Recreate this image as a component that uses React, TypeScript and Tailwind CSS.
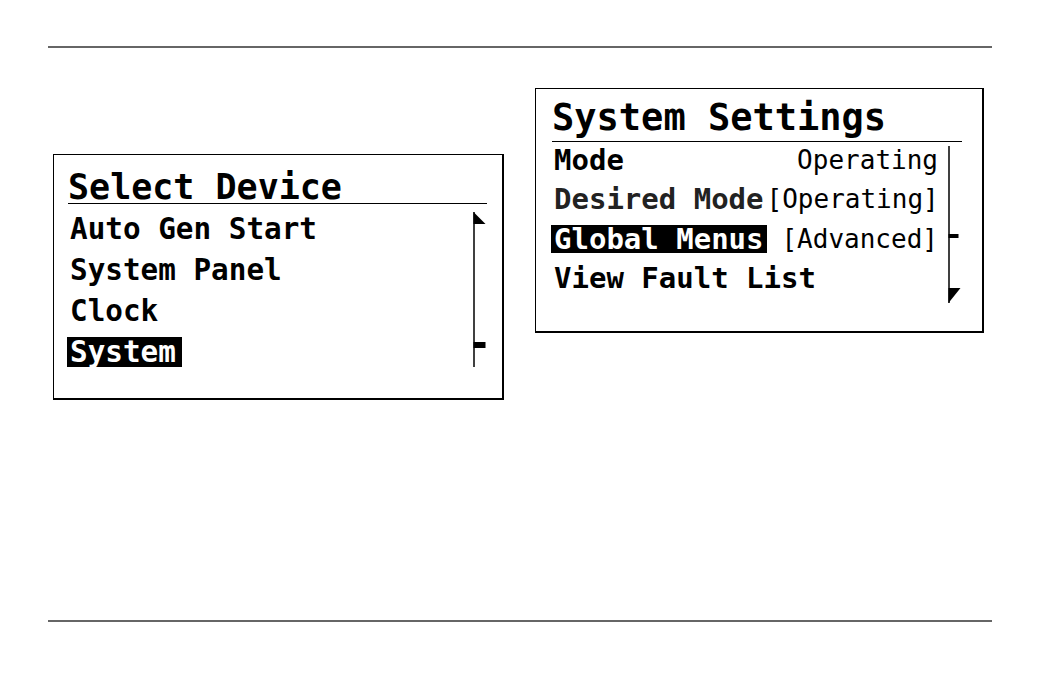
import React from 'react';

function ScrollUp() {
  return (
    <svg width="14" height="156" viewBox="0 0 14 156" className="shrink-0">
      <line x1="1" y1="0" x2="1" y2="155" stroke="black" strokeWidth="1.5" />
      <polygon points="0.5,0 12.5,12 0.5,12" fill="black" />
      <rect x="0.5" y="130" width="12" height="6" fill="black" />
    </svg>
  );
}

function ScrollDown() {
  return (
    <svg width="14" height="158" viewBox="0 0 14 158" className="shrink-0">
      <line x1="1" y1="0" x2="1" y2="157" stroke="black" strokeWidth="1.5" />
      <rect x="0.5" y="88" width="10" height="4" fill="black" />
      <polygon points="0.5,142 12.5,142 0.5,157" fill="black" />
    </svg>
  );
}

const leftItems = ['Auto Gen Start', 'System Panel', 'Clock', 'System'];

function SelectDevice() {
  return (
    <div className="ml-[5px] mt-[106px] w-[451px] h-[246px] border-l border-t border-r-2 border-b-2 border-black pl-[14px] pt-[17px]">
      <div className="w-[419px] border-b-[1.5px] border-black text-[35px] font-bold leading-[31px] whitespace-pre">
        Select Device
      </div>
      <div className="flex mt-[4px]">
        <div className="w-[405px]">
          {leftItems.map((item, i) => (
            <div key={item} className="h-[41px] flex items-center">
              <span
                className={
                  'text-[29.3px] font-bold leading-[30px] whitespace-pre pl-[3px] pr-[6px] -ml-[1px] ' +
                  (i === 3 ? 'bg-black text-white' : '')
                }
              >
                {item}
              </span>
            </div>
          ))}
        </div>
        <div className="mt-[4px]">
          <ScrollUp />
        </div>
      </div>
    </div>
  );
}

const rightRows = [
  { label: 'Mode', value: 'Operating', tone: 'text-black' },
  { label: 'Desired Mode', value: '[Operating]', tone: 'text-[#222]' },
  { label: 'Global Menus', value: '[Advanced]', tone: 'text-black', active: true },
  { label: 'View Fault List', value: '', tone: 'text-black' },
];

function SystemSettings() {
  return (
    <div className="ml-[31px] mt-[40px] w-[449px] h-[245px] border-l border-t border-r-2 border-b-2 border-black pl-[16px] pt-[9px]">
      <div className="w-[410px] border-b-[1.5px] border-black text-[37px] font-bold leading-[40px] pb-[3px] whitespace-pre">
        System Settings
      </div>
      <div className="flex">
        <div className="w-[386px] -mt-[2px]">
          {rightRows.map((row) => (
            <div key={row.label} className="h-[39.5px] flex items-center">
              <span
                className={
                  'text-[29px] font-bold leading-[28px] whitespace-pre px-[3px] -ml-[1px] ' +
                  (row.active ? 'bg-black text-white' : row.tone)
                }
              >
                {row.label}
              </span>
              <span className="flex-1" />
              <span className="text-[26px] leading-[28px] whitespace-pre">{row.value}</span>
            </div>
          ))}
        </div>
        <div className="ml-[10px] mt-[4px]">
          <ScrollDown />
        </div>
      </div>
    </div>
  );
}

export default function App() {
  return (
    <div className="w-[1040px] h-[673px] bg-white px-[48px] pt-[46px] font-['DejaVu_Sans_Mono',monospace] text-black">
      <div className="h-[2px] bg-[#666]" />
      <div className="flex items-start h-[572px]">
        <SelectDevice />
        <SystemSettings />
      </div>
      <div className="h-[2px] bg-[#666]" />
    </div>
  );
}
